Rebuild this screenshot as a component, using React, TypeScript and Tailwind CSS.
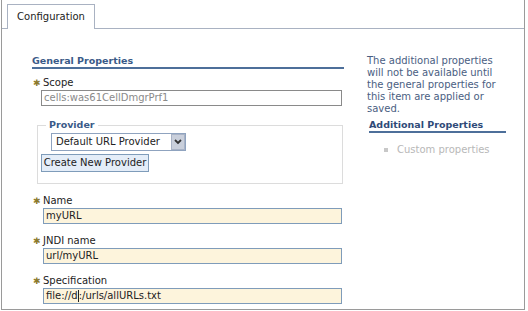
import React from "react";

function Req({ label }: { label: string }) {
  return (
    <div className="flex items-center h-[12px] text-[#222]">
      <span className="inline-block w-[10px] ml-px text-[9px] leading-none text-[#8c7a2c]">✱</span>
      <span>{label}</span>
    </div>
  );
}

function Field({ value, caret }: { value: string; caret?: number }) {
  return (
    <div className="ml-[11px] mt-px h-[16px] w-[299px] border border-[#7f9cba] bg-[#fdf4dc] px-[2px] flex items-center text-[#222] whitespace-pre">
      {caret === undefined ? (
        value
      ) : (
        <>
          {value.slice(0, caret)}
          <span className="inline-block w-px h-[12px] bg-[#222]" />
          {value.slice(caret)}
        </>
      )}
    </div>
  );
}

export default function App() {
  return (
    <div className="w-[528px] h-[311px] bg-white font-['DejaVu_Sans',sans-serif] text-[10px] leading-[12px]">
      <div className="ml-px mr-[3px] h-[310px] border-x border-b border-[#9a9a9a] flex flex-col">
        {/* tabs */}
        <div className="pt-[4px] pl-[5px] border-b border-[#a9b2c2] flex">
          <div className="-mb-px h-[25px] w-[88px] border border-b-0 border-[#a9b2c2] bg-white flex items-center justify-center text-[#222]">
            Configuration
          </div>
        </div>

        <div className="flex">
          {/* left column */}
          <div className="pl-[30px] w-[342px] pt-[26px]">
            <div className="font-bold text-[#3a5a88] text-[9.5px] leading-[12px]">General Properties</div>
            <div className="h-[2px] bg-[#4d6f9a]" />

            <div className="mt-[8px]">
              <Req label="Scope" />
              <div className="ml-[9px] mt-px h-[16px] w-[301px] border border-[#8a8a8a] bg-white px-[2px] flex items-center text-[#8a8a8a]">
                cells:was61CellDmgrPrf1
              </div>
            </div>

            <fieldset className="mt-[13px] ml-[5px] w-[306px] h-[65px] border border-[#dcdcdc] px-[3px] pb-[2px]">
              <legend className="ml-[5px] px-[3px] font-bold text-[9.5px] text-[#3a5a88]">Provider</legend>
              <div className="ml-[10px] mt-[2px] flex items-center h-[18px] w-[135px] border border-[#8fa3bf] bg-white">
                <span className="flex-1 pl-[4px] text-[#222]">Default URL Provider</span>
                <span className="w-[14px] h-[16px] bg-[#c9cfdb] border border-[#a9b3c6] flex items-center justify-center">
                  <svg width="8" height="6" viewBox="0 0 8 6">
                    <path d="M1 1 L4 4 L7 1" stroke="#333" strokeWidth="1.8" fill="none" />
                  </svg>
                </span>
              </div>
              <div className="mt-[3px] h-[18px] w-[108px] border border-[#7f9cba] bg-[#e4edf8] flex items-center justify-center text-[#222]">
                Create New Provider
              </div>
            </fieldset>

            <div className="mt-[11px]">
              <Req label="Name" />
              <Field value="myURL" />
            </div>
            <div className="mt-[11px]">
              <Req label="JNDI name" />
              <Field value="url/myURL" />
            </div>
            <div className="mt-[11px]">
              <Req label="Specification" />
              <Field value="file://d:/urls/allURLs.txt" caret={8} />
            </div>
          </div>

          {/* right column */}
          <div className="pl-[23px] pt-[26px] w-[160px]">
            <p className="text-[#4a5e82] w-[140px]">
              The additional properties will not be available until the general properties for this item are applied or saved.
            </p>
            <div className="mt-[4px] ml-[2px] w-[137px] font-bold text-[9.5px] text-[#2f4a78]">Additional Properties</div>
            <div className="ml-[2px] w-[137px] h-[2px] bg-[#4d6f9a]" />
            <div className="mt-[11px] ml-[17px] flex items-center text-[#b8b8b8]">
              <span className="w-[4px] h-[4px] bg-[#c8c8c8] mr-[9px]" />
              Custom properties
            </div>
          </div>
        </div>
      </div>
    </div>
  );
}
